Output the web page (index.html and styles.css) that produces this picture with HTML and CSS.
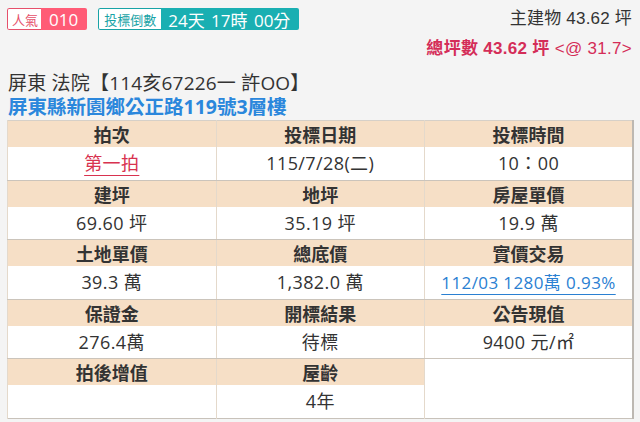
FILE: index.html
```html
<!DOCTYPE html>
<html lang="zh-Hant">
<head>
<meta charset="utf-8">
<link rel="stylesheet" href="styles.css">
</head>
<body>
<div class="page">
  <div class="top">
    <div class="badges">
      <span class="badge pop"><span class="lbl">人氣</span><span class="val">010</span></span>
      <span class="badge cd"><span class="lbl">投標倒數</span><span class="val">24天 17時 00分</span></span>
    </div>
    <div class="area">
      <div class="main-area">主建物 43.62 坪</div>
      <div class="total-area"><b>總坪數 43.62 坪</b> &lt;@ 31.7&gt;</div>
    </div>
  </div>
  <div class="title">屏東 法院【114亥67226一 許OO】</div>
  <div class="addr">屏東縣新園鄉公正路119號3層樓</div>
  <table class="info">
    <tr class="hd"><th>拍次</th><th>投標日期</th><th>投標時間</th></tr>
    <tr class="vl"><td><a class="red">第一拍</a></td><td>115/7/28(二)</td><td>10：00</td></tr>
    <tr class="hd"><th>建坪</th><th>地坪</th><th>房屋單價</th></tr>
    <tr class="vl"><td>69.60 坪</td><td>35.19 坪</td><td>19.9 萬</td></tr>
    <tr class="hd"><th>土地單價</th><th>總底價</th><th>實價交易</th></tr>
    <tr class="vl"><td>39.3 萬</td><td>1,382.0 萬</td><td><a class="blue">112/03 1280萬 0.93%</a></td></tr>
    <tr class="hd"><th>保證金</th><th>開標結果</th><th>公告現值</th></tr>
    <tr class="vl"><td>276.4萬</td><td>待標</td><td>9400 元/㎡</td></tr>
    <tr class="hd"><th>拍後增值</th><th>屋齡</th><td class="empty" rowspan="2"></td></tr>
    <tr class="vl last"><td></td><td>4年</td></tr>
  </table>
</div>
</body>
</html>
```

FILE: styles.css
```css
html, body {
  margin: 0;
  padding: 0;
  background: #f4f4f4;
}
body {
  font-family: "Open Sans", "Noto Sans CJK TC", sans-serif;
  color: #333;
  font-size: 16px;
}
.page {
  padding: 0 7px 0 7px;
}
.top {
  display: flex;
  justify-content: space-between;
  align-items: flex-start;
}
.badges {
  display: flex;
  gap: 11px;
  margin-top: 8px;
}
.badge {
  display: flex;
  height: 22px;
  border-radius: 2px;
  overflow: hidden;
  white-space: nowrap;
  font-family: "Noto Sans CJK TC", sans-serif;
}
.badge .lbl {
  display: flex;
  align-items: center;
  background: #fff;
  font-size: 13px;
  border: 1px solid;
  border-right: none;
  border-radius: 2px 0 0 2px;
}
.badge .val {
  display: flex;
  align-items: center;
  color: #fff;
  font-family: "Open Sans", "Noto Sans CJK TC", sans-serif;
  font-size: 17px;
}
.pop .lbl { color: #e6506b; border-color: #e6506b; padding: 0 3px 0 4px; }
.pop .val { background: #ff5b76; padding: 0 9px 0 8px; }
.cd .lbl { color: #18a3a6; border-color: #18a3a6; padding: 0 5px 0 5px; }
.cd .val { background: #1aafb2; padding: 0 9px 0 7px; word-spacing: 2px; }
.area {
  text-align: right;
  margin-top: 4px;
  padding-right: 1px;
  font-family: "Liberation Sans", "Noto Sans CJK TC", sans-serif;
}
.main-area {
  line-height: 30px;
  font-size: 17px;
  letter-spacing: 0.2px;
}
.total-area {
  line-height: 30px;
  font-size: 17px;
  letter-spacing: 0.3px;
  color: #d42d58;
}
.total-area b { font-weight: 700; }
.title {
  margin-top: 7px;
  line-height: 24px;
  font-size: 19px;
  letter-spacing: 0.2px;
  padding-left: 1px;
}
.addr {
  line-height: 24px;
  font-size: 19.5px;
  font-weight: 700;
  color: #2b87dc;
  padding-left: 1px;
}
.info {
  margin-top: 1px;
  width: 627px;
  border-collapse: collapse;
  table-layout: fixed;
  border-top: 1px solid #d6d0c8;
  border-left: 1px solid #e3ddd6;
  border-right: 2px solid #bdb8b2;
  border-bottom: 1px solid #c8c2ba;
}
.info th, .info td {
  text-align: center;
  padding: 0;
  border-left: 1px solid #e4d9cb;
  font-size: 18px;
  line-height: 22px;
}
.info tr.hd th {
  height: 26px;
  background: #f6dfc6;
  font-weight: 700;
  font-family: "Noto Sans CJK TC", sans-serif;
  color: #333;
}
.info tr.vl td {
  height: 32.5px;
  background: #fff;
  border-bottom: 1px solid #cbc4bb;
  letter-spacing: 0.4px;
}
.info tr.vl.last td { border-bottom: none; }
.info td.empty {
  background: #fff;
}
a.red {
  color: #d8324f;
  text-decoration: underline;
  text-decoration-color: #d8324f;
  text-underline-offset: 5px;
}
a.blue {
  color: #2a80d2;
  font-size: 17px;
  letter-spacing: 0.4px;
  text-decoration: underline;
  text-underline-offset: 5px;
}
```
